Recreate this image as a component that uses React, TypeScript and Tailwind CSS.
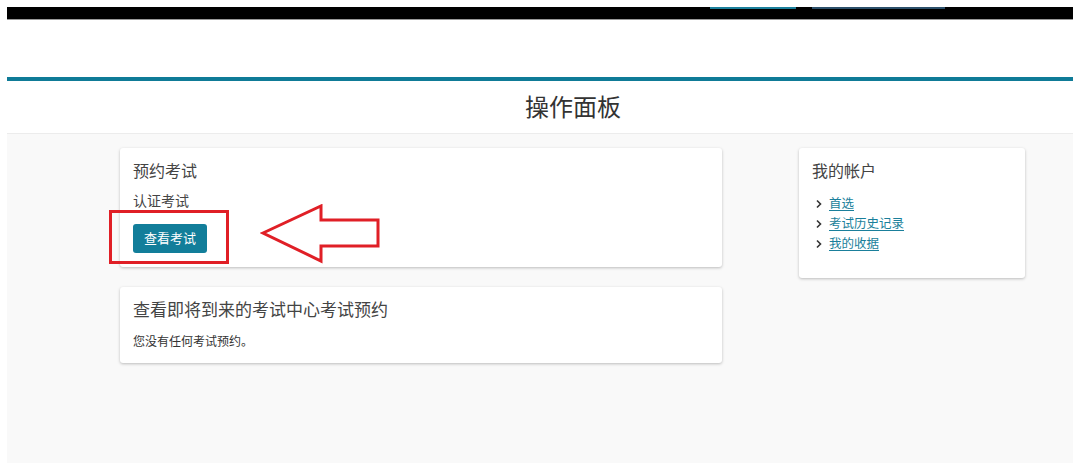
import React from "react";

const font = { fontFamily: '"Noto Sans", "Noto Sans CJK SC", sans-serif' };

function Chevron() {
  return (
    <svg width="8" height="10" viewBox="0 0 8 10" className="shrink-0">
      <path d="M2 1.5 L5.5 5 L2 8.5" fill="none" stroke="#333" strokeWidth="1.6" />
    </svg>
  );
}

export default function App() {
  return (
    <div className="w-[1080px] h-[475px] bg-white overflow-hidden relative" style={font}>
      <div className="h-[7px]" />
      <div className="relative mx-[7px] h-[13px] bg-black border-b border-[#999]">
        <div className="absolute left-[703px] top-0 w-[86px] h-[2px] bg-[#1a7f9b]" />
        <div className="absolute left-[805px] top-0 w-[133px] h-[2px] bg-[#2b4f6a]" />
      </div>
      <div className="h-[57px]" />
      <div className="mx-[7px]">
        <div className="h-[4px] bg-[#0f7b97]" />
        <div className="h-[53px] flex items-center justify-center pl-[66px] border-b border-[#ececec]">
          <h1 className="text-[24px] text-[#333] leading-none">操作面板</h1>
        </div>
        <div className="h-[329px] bg-[#f9f9f9] pt-[14px] pl-[113px] flex items-start gap-[77px]">
          <div className="w-[602px] flex flex-col gap-[20px]">
            <div className="relative bg-white rounded-[3px] shadow-[0_1px_3px_rgba(0,0,0,0.25)] px-[13px] pt-[12px] h-[119px]">
              <div className="text-[16px] text-[#444] leading-[22px]">预约考试</div>
              <div className="text-[14px] text-[#444] leading-[20px] mt-[9px]">认证考试</div>
              <button className="mt-[13px] h-[29px] px-[11px] rounded-[3px] bg-[#127e9a] text-white text-[13px] leading-none">
                查看考试
              </button>
              {/* red highlight box */}
              <div className="absolute left-[-11px] top-[62px] w-[120px] h-[54px] border-[3px] border-[#e01f26]" />
              {/* arrow */}
              <svg className="absolute left-[140px] top-[56px]" width="122" height="60" viewBox="0 0 122 60">
                <path
                  d="M3 29 L61 2 L61 16 L118 16 L118 42 L61 42 L61 57 Z"
                  fill="none"
                  stroke="#e01f26"
                  strokeWidth="3"
                  strokeLinejoin="miter"
                />
              </svg>
            </div>
            <div className="bg-white rounded-[3px] shadow-[0_1px_3px_rgba(0,0,0,0.25)] px-[13px] pt-[11px] h-[76px]">
              <div className="text-[17px] text-[#444] leading-[24px]">查看即将到来的考试中心考试预约</div>
              <div className="text-[12px] text-[#333] leading-[16px] mt-[12px]">您没有任何考试预约。</div>
            </div>
          </div>
          <div className="w-[226px] h-[130px] bg-white rounded-[3px] shadow-[0_1px_3px_rgba(0,0,0,0.25)] px-[13px] pt-[12px]">
            <div className="text-[16px] text-[#444] leading-[22px]">我的帐户</div>
            <ul className="mt-[12px] flex flex-col gap-[1px]">
              {["首选", "考试历史记录", "我的收据"].map((t) => (
                <li key={t} className="flex items-center gap-[6px] pl-[3px] text-[12.5px] leading-[19px]">
                  <Chevron />
                  <a href="#" className="text-[#1a7f9b] underline underline-offset-2">
                    {t}
                  </a>
                </li>
              ))}
            </ul>
          </div>
        </div>
      </div>
    </div>
  );
}
